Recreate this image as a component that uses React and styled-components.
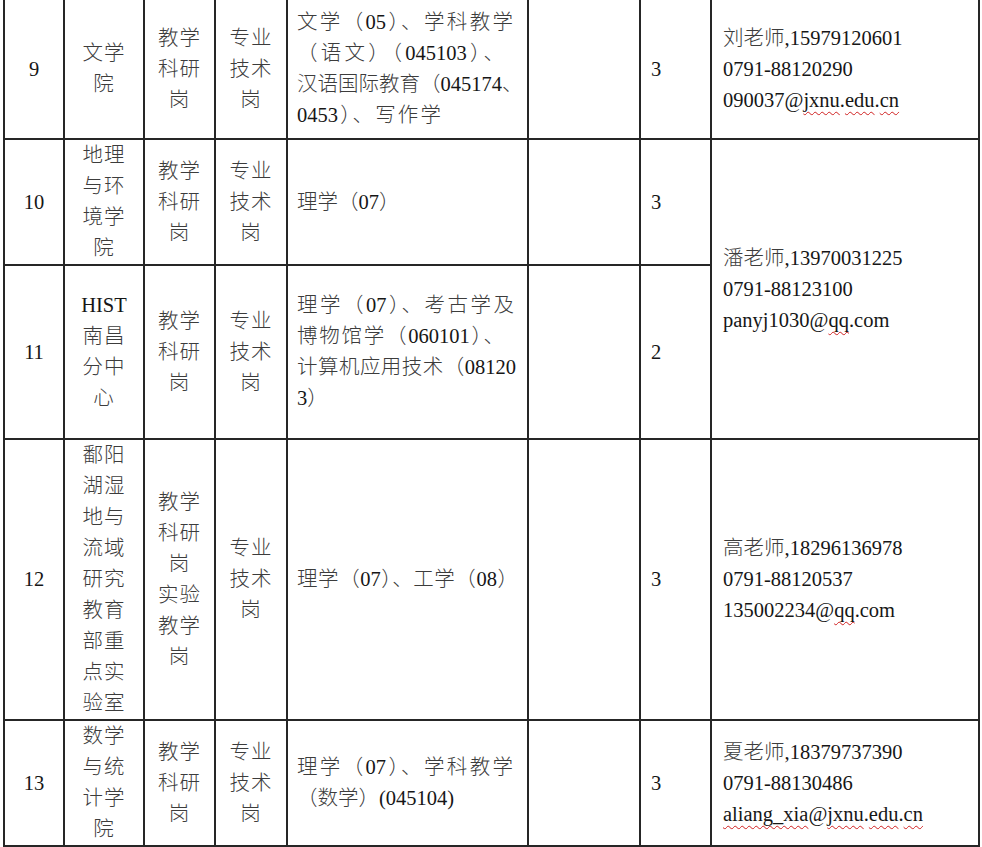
import React from 'react';
import styled, { createGlobalStyle } from 'styled-components';

const Global = createGlobalStyle`
  html, body { margin: 0; padding: 0; background: #fff; }
  body {
    font-family: "Liberation Serif", "Noto Sans CJK SC", serif;
    color: #161616;
  }
`;

const Page = styled.div`
  padding-left: 3px;
  width: 982px;
  height: 847px;
  overflow: hidden;
  box-sizing: border-box;
`;

const Table = styled.table`
  border-collapse: collapse;
  table-layout: fixed;
  width: 975px;
  font-size: 20.5px;
  line-height: 31px;
  tr:first-child > td { border-top: none; }
`;

const Row = styled.tr`
  height: ${p => p.$h}px;
`;

const Cell = styled.td`
  border: 2px solid #262626;
  padding: 0 ${p => (p.$pad != null ? p.$pad : 10)}px;
  vertical-align: middle;
  text-align: ${p => p.$align || 'left'};
  white-space: nowrap;
  overflow: hidden;
`;

const Line = styled.div`
  display: block;
`;

const JustLine = styled.div`
  display: block;
  width: ${p => (p.$w ? `${p.$w}px` : 'auto')};
  text-align: left;
  text-align-last: ${p => (p.$w ? 'justify' : 'left')};
  text-justify: inter-character;
  white-space: ${p => (p.$w ? 'normal' : 'nowrap')};
`;

const Han = styled.span`
  color: #3c3c3c;
  font-weight: 300;
  letter-spacing: ${p => (p.$spaced ? '1px' : '0')};
`;

const Wavy = styled.span`
  text-decoration: underline wavy #d02020;
  text-decoration-thickness: 1px;
  text-underline-offset: 4px;
  text-decoration-skip-ink: none;
`;

const cjkRe = /([\u3000-\u303f\u4e00-\u9fff\uff00-\uffef]+)/;

function Mixed({ text, spaced }) {
  return text.split(cjkRe).filter(Boolean).map((part, i) =>
    cjkRe.test(part) ? <Han key={i} $spaced={spaced}>{part}</Han> : <React.Fragment key={i}>{part}</React.Fragment>
  );
}

function Lines({ lines, spaced }) {
  return lines.map((l, i) => (
    <Line key={i}><Mixed text={l} spaced={spaced} /></Line>
  ));
}

const cols = [60, 80, 71, 72, 241, 112, 71, 268];

const contact9 = [
  '刘老师,15979120601',
  '0791-88120290',
  <>090037@<Wavy>jxnu</Wavy>.<Wavy>edu</Wavy>.<Wavy>cn</Wavy></>,
];
const contact10 = [
  '潘老师,13970031225',
  '0791-88123100',
  <>panyj1030@<Wavy>qq</Wavy>.com</>,
];
const contact12 = [
  '高老师,18296136978',
  '0791-88120537',
  <>135002234@<Wavy>qq</Wavy>.com</>,
];
const contact13 = [
  '夏老师,18379737390',
  '0791-88130486',
  <><Wavy>aliang_xia</Wavy>@<Wavy>jxnu</Wavy>.<Wavy>edu</Wavy>.<Wavy>cn</Wavy></>,
];

const rows = [
  {
    no: '9', h: 139,
    dept: ['文学', '院'],
    post: ['教学', '科研', '岗'],
    kind: ['专业', '技术', '岗'],
    major: [
      { t: '文学（05）、学科教学', w: 216 },
      { t: '（语文）（045103）、', w: 207 },
      { t: '汉语国际教育（045174、' },
      { t: '0453）、写作学', w: 144 },
    ],
    count: '3', contact: contact9, span: 1,
  },
  {
    no: '10', h: 125,
    dept: ['地理', '与环', '境学', '院'],
    post: ['教学', '科研', '岗'],
    kind: ['专业', '技术', '岗'],
    major: [{ t: '理学（07）' }],
    count: '3', contact: contact10, span: 2,
  },
  {
    no: '11', h: 174,
    dept: ['HIST', '南昌', '分中', '心'],
    post: ['教学', '科研', '岗'],
    kind: ['专业', '技术', '岗'],
    major: [
      { t: '理学（07）、考古学及', w: 217 },
      { t: '博物馆学（060101）、', w: 207 },
      { t: '计算机应用技术（08120', w: 219 },
      { t: '3）' },
    ],
    count: '2', contact: null,
  },
  {
    no: '12', h: 281,
    dept: ['鄱阳', '湖湿', '地与', '流域', '研究', '教育', '部重', '点实', '验室'],
    post: ['教学', '科研', '岗', '实验', '教学', '岗'],
    kind: ['专业', '技术', '岗'],
    major: [{ t: '理学（07）、工学（08）', w: 221 }],
    count: '3', contact: contact12, span: 1,
  },
  {
    no: '13', h: 126,
    dept: ['数学', '与统', '计学', '院'],
    post: ['教学', '科研', '岗'],
    kind: ['专业', '技术', '岗'],
    major: [
      { t: '理学（07）、学科教学', w: 216 },
      { t: '（数学）(045104)' },
    ],
    count: '3', contact: contact13, span: 1,
  },
];

export default function App() {
  return (
    <Page>
      <Global />
      <Table>
        <colgroup>
          {cols.map((w, i) => <col key={i} style={{ width: w }} />)}
        </colgroup>
        <tbody>
          {rows.map(r => (
            <Row key={r.no} $h={r.h}>
              <Cell $align="center" $pad={0}>{r.no}</Cell>
              <Cell $align="center" $pad={0}><Lines lines={r.dept} spaced /></Cell>
              <Cell $align="center" $pad={0}><Lines lines={r.post} spaced /></Cell>
              <Cell $align="center" $pad={0}><Lines lines={r.kind} spaced /></Cell>
              <Cell $pad={9}>
                {r.major.map((m, i) => (
                  <JustLine key={i} $w={m.w}><Mixed text={m.t} /></JustLine>
                ))}
              </Cell>
              <Cell />
              <Cell $pad={10}>{r.count}</Cell>
              {r.contact && (
                <Cell rowSpan={r.span} $pad={11}>
                  {r.contact.map((c, i) => (
                    <Line key={i}>{typeof c === 'string' ? <Mixed text={c} /> : c}</Line>
                  ))}
                </Cell>
              )}
            </Row>
          ))}
        </tbody>
      </Table>
    </Page>
  );
}
